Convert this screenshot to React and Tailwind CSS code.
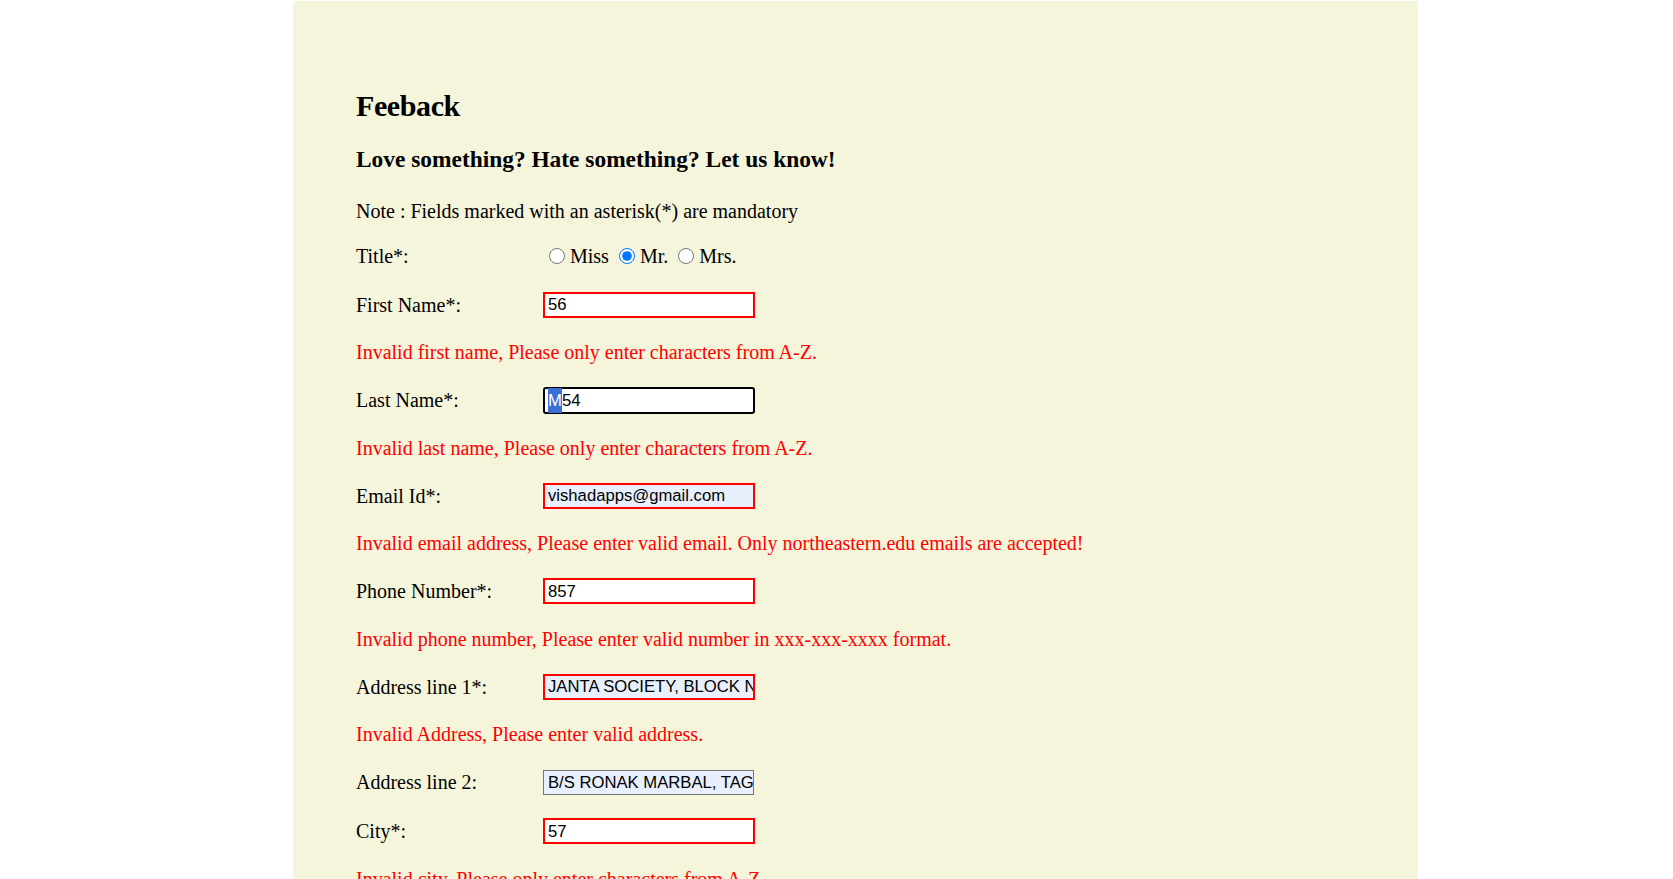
import React from "react";

const serif = "font-['Liberation_Serif','Times_New_Roman',serif]";
const sans = "font-['Liberation_Sans',Arial,sans-serif]";

function Field({ label, children }) {
    return (
        <div className="flex items-center h-[49px]">
            <span className="w-[187px] shrink-0">{label}</span>
            {children}
        </div>
    );
}

function ErrorRow({ children }) {
    return <div className="flex items-center h-[46.5px] text-[#ff0000]">{children}</div>;
}

function Box({ value, variant = "error", autofill = false }) {
    const base = `${sans} text-[16.67px] text-black flex items-center overflow-hidden whitespace-nowrap`;
    if (variant === "plain") {
        return (
            <div className={`${base} w-[211px] h-[25px] border border-[#767676] pl-[4px] ${autofill ? "bg-[#e8f0fe]" : "bg-white"}`}>
                {value}
            </div>
        );
    }
    return (
        <div className={`${base} w-[212px] h-[26px] border-2 border-[#ff0000] pl-[3px] ${autofill ? "bg-[#e8f0fe]" : "bg-white"}`}>
            {value}
        </div>
    );
}

export default function App() {
    return (
        <div className="min-h-screen bg-white">
            <div className={`${serif} ml-[293px] mt-px w-[1125px] min-h-[878px] bg-[#f5f5dc] pl-[63px] pt-[79px] text-[20px] text-black`}>
                {/* Headings */}
                <div className="flex items-center h-[50px]">
                    <h2 className="text-[30px] font-bold tracking-[-0.4px]">Feeback</h2>
                </div>
                <div className="flex items-center h-[60px]">
                    <h3 className="text-[23.4px] font-bold">Love something? Hate something? Let us know!</h3>
                </div>
                <div className="flex items-center h-[42px]">
                    <p>Note : Fields marked with an asterisk(*) are mandatory</p>
                </div>

                {/* Title radios */}
                <div className="flex items-center h-[48px]">
                    <span className="w-[187px] shrink-0">Title*:</span>
                    <div className="flex items-center">
                        <input type="radio" name="title" className="w-4 h-4 m-0 ml-[6px] mr-[5px]" />
                        <span>Miss</span>
                        <input type="radio" name="title" defaultChecked className="w-4 h-4 m-0 ml-[10px] mr-[5px]" />
                        <span>Mr.</span>
                        <input type="radio" name="title" className="w-4 h-4 m-0 ml-[10px] mr-[5px]" />
                        <span>Mrs.</span>
                    </div>
                </div>

                <Field label="First Name*:">
                    <Box value="56" />
                </Field>
                <ErrorRow>Invalid first name, Please only enter characters from A-Z.</ErrorRow>

                <Field label="Last Name*:">
                    <div className={`${sans} text-[16.67px] text-black flex items-center w-[212px] h-[27px] border-2 border-black rounded-[3px] bg-white pl-[3px]`}>
                        <span className="bg-[#3a6fd8] text-white">M</span>
                        <span>54</span>
                    </div>
                </Field>
                <ErrorRow>Invalid last name, Please only enter characters from A-Z.</ErrorRow>

                <Field label="Email Id*:">
                    <Box value="vishadapps@gmail.com" autofill />
                </Field>
                <ErrorRow>Invalid email address, Please enter valid email. Only northeastern.edu emails are accepted!</ErrorRow>

                <Field label="Phone Number*:">
                    <Box value="857" />
                </Field>
                <ErrorRow>Invalid phone number, Please enter valid number in xxx-xxx-xxxx format.</ErrorRow>

                <Field label="Address line 1*:">
                    <Box value="JANTA SOCIETY, BLOCK NO 5" autofill />
                </Field>
                <ErrorRow>Invalid Address, Please enter valid address.</ErrorRow>

                <Field label="Address line 2:">
                    <Box value="B/S RONAK MARBAL, TAGORE ROAD" variant="plain" autofill />
                </Field>

                <Field label="City*:">
                    <Box value="57" />
                </Field>
                <ErrorRow>Invalid city, Please only enter characters from A-Z.</ErrorRow>
            </div>
        </div>
    );
}
